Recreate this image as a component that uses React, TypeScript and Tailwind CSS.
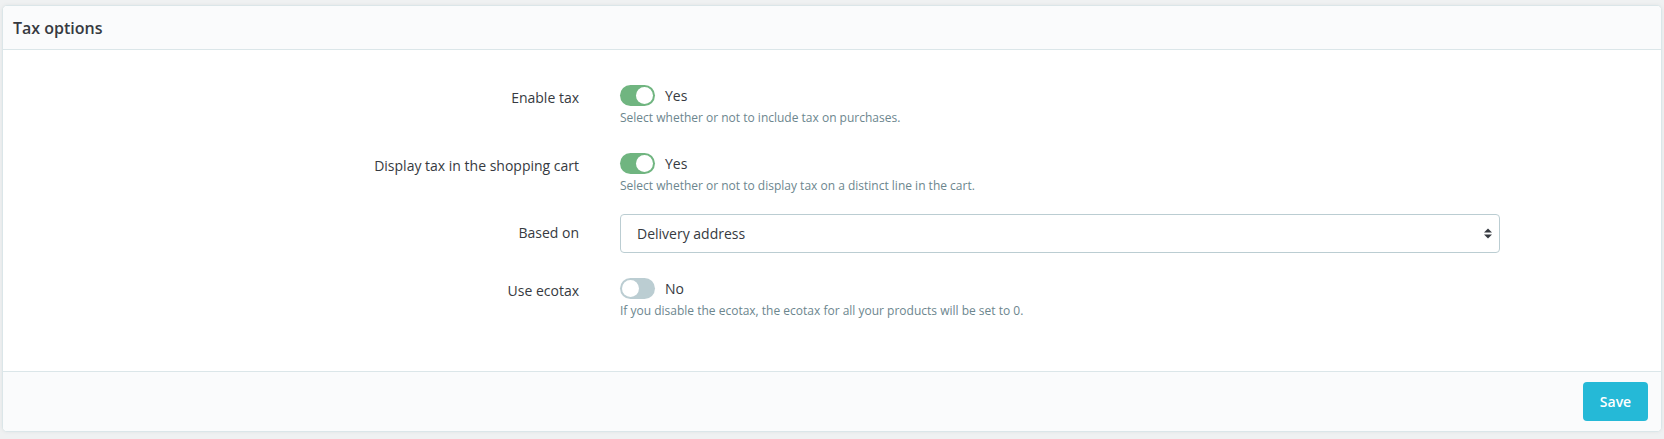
import React from "react";

type Row = {
  label: string;
  kind: "switch" | "select";
  on?: boolean;
  help?: string;
  value?: string;
  mb: string;
};

const rows: Row[] = [
  {
    label: "Enable tax",
    kind: "switch",
    on: true,
    help: "Select whether or not to include tax on purchases.",
    mb: "mb-[27px]",
  },
  {
    label: "Display tax in the shopping cart",
    kind: "switch",
    on: true,
    help: "Select whether or not to display tax on a distinct line in the cart.",
    mb: "mb-[20px]",
  },
  { label: "Based on", kind: "select", value: "Delivery address", mb: "mb-[25px]" },
  {
    label: "Use ecotax",
    kind: "switch",
    on: false,
    help: "If you disable the ecotax, the ecotax for all your products will be set to 0.",
    mb: "mb-0",
  },
];

function Switch({ on }: { on: boolean }) {
  return (
    <div className="flex h-[21px] items-center gap-[10px]">
      <span
        className={
          "relative inline-block h-[21px] w-[35px] rounded-full " +
          (on ? "bg-[#70b580]" : "bg-[#bbcdd2]")
        }
      >
        <span
          className={
            "absolute top-[2px] h-[17px] w-[17px] rounded-full bg-white " +
            (on ? "right-[2px]" : "left-[2px]")
          }
        />
      </span>
      <span className="text-[14px] text-[#363a41]">{on ? "Yes" : "No"}</span>
    </div>
  );
}

function Select({ value }: { value: string }) {
  return (
    <div className="flex h-[39px] w-[880px] items-center justify-between rounded-[4px] border border-[#bbcdd2] bg-white pl-[16px] pr-[7px] text-[14px] text-[#363a41]">
      <span>{value}</span>
      <svg width="8" height="11" viewBox="0 0 8 11" fill="#363a41">
        <path d="M0 4.5 L4 0.5 L8 4.5 Z" />
        <path d="M0 6.5 L8 6.5 L4 10.5 Z" />
      </svg>
    </div>
  );
}

export default function App() {
  return (
    <div
      className="min-h-screen bg-[#eff1f2] px-[2px] pt-[5px]"
      style={{ fontFamily: '"Open Sans", "Liberation Sans", sans-serif' }}
    >
      <div className="overflow-hidden rounded-[5px] border border-[#dbe6e9] bg-white shadow-[0_0_4px_0_rgba(0,0,0,0.06)]">
        {/* Header */}
        <div className="flex h-[44px] items-center border-b border-[#dbe6e9] bg-[#fafbfc] px-[10px]">
          <h3 className="text-[16px] font-semibold text-[#363a41]">Tax options</h3>
        </div>

        {/* Body */}
        <div className="pb-[52px] pt-[35px]">
          {rows.map((row) => (
            <div key={row.label} className={"flex " + row.mb}>
              <div
                className={
                  "w-[576px] shrink-0 text-right text-[14px] text-[#363a41] " +
                  (row.kind === "select"
                    ? "flex h-[39px] items-center justify-end pb-[2px]"
                    : "pt-[2px] leading-[21px]")
                }
              >
                {row.label}
              </div>
              <div className="pl-[41px]">
                {row.kind === "switch" ? (
                  <>
                    <Switch on={!!row.on} />
                    <p className="mt-[4px] text-[12px] leading-[16px] text-[#6c868e]">
                      {row.help}
                    </p>
                  </>
                ) : (
                  <Select value={row.value ?? ""} />
                )}
              </div>
            </div>
          ))}
        </div>

        {/* Footer */}
        <div className="flex h-[60px] items-start justify-end border-t border-[#dbe6e9] bg-[#fafbfc] pr-[13px] pt-[10px]">
          <button className="h-[39px] w-[65px] rounded-[4px] bg-[#25b9d7] text-[14px] font-semibold text-white">
            Save
          </button>
        </div>
      </div>
    </div>
  );
}
